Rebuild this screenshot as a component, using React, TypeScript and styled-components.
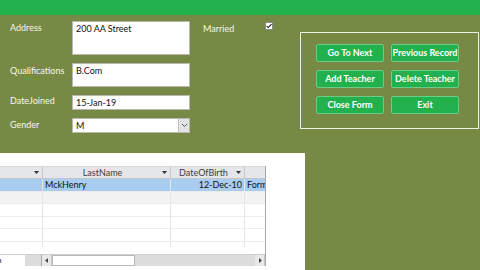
import React from "react";
import styled, { createGlobalStyle } from "styled-components";

const Global = createGlobalStyle`
  html, body { margin: 0; padding: 0; width: 480px; height: 270px; overflow: hidden; background: #778a45; }
  body { font-family: Lato, "Liberation Sans", sans-serif; }
  * { box-sizing: border-box; }
`;

const Page = styled.div`
  width: 480px;
  height: 270px;
  display: flex;
  flex-direction: column;
  background: #778a45;
  overflow: hidden;
`;

const TopBar = styled.div`
  height: 15px;
  flex: none;
  background: #22b14c;
`;

const Upper = styled.div`
  height: 138px;
  flex: none;
  display: flex;
`;

const Fields = styled.div`
  display: grid;
  grid-template-columns: 62px 118px;
  grid-template-rows: 34px 24px 15px 15px;
  row-gap: 8px;
  padding: 6px 0 0 10px;
  align-content: start;
`;

const Label = styled.div<{ $pad: number }>`
  color: #f6f6ee;
  font-size: 9px;
  line-height: 11px;
  padding-top: ${(p) => p.$pad}px;
  white-space: nowrap;
`;

const TextBox = styled.div`
  background: #fff;
  border: 1px solid #b8b8b0;
  color: #111;
  font-size: 9px;
  line-height: 11px;
  padding: 1px 3px;
  display: flex;
  align-items: flex-start;
`;

const Combo = styled(TextBox)`
  padding: 1px 0 1px 3px;
  justify-content: space-between;
`;

const DropBtn = styled.div`
  width: 11px;
  height: 13px;
  margin-top: -1px;
  background: #e4e4e4;
  border-left: 1px solid #c0c0c0;
  display: flex;
  align-items: center;
  justify-content: center;
`;

const MarriedBlock = styled.div`
  width: 110px;
  display: flex;
  align-items: flex-start;
  padding: 8px 0 0 13px;
`;

const MarriedLabel = styled.div`
  width: 62px;
  color: #f6f6ee;
  font-size: 9px;
  line-height: 11px;
`;

const Check = styled.div`
  width: 8px;
  height: 8px;
  margin-top: -1px;
  background: #fff;
  border: 1px solid #8a8a8a;
  display: flex;
  align-items: center;
  justify-content: center;
`;

const Frame = styled.div`
  margin-top: 17px;
  width: 179px;
  height: 97px;
  border: 1px solid #eef0e4;
  padding: 11px 0 0 15px;
  display: grid;
  grid-template-columns: 68px 68px;
  grid-auto-rows: 18px;
  column-gap: 7px;
  row-gap: 8px;
  align-content: start;
`;

const Button = styled.button`
  margin: 0;
  padding: 0;
  background: #22b14c;
  border: 1px solid #6ccb86;
  border-radius: 2px;
  color: #fff;
  font-family: Lato, "Liberation Sans", sans-serif;
  font-weight: 700;
  font-size: 9px;
  line-height: 16px;
  white-space: nowrap;
  display: flex;
  align-items: center;
  justify-content: center;
`;

const Lower = styled.div`
  flex: 1;
  display: flex;
`;

const SubPanel = styled.div`
  width: 305px;
  background: #fff;
  padding-top: 13px;
`;

const Sheet = styled.div`
  width: 266px;
  height: 100px;
  display: flex;
  flex-direction: column;
  border-right: 1px solid #a8a8a8;
  overflow: hidden;
`;

const cols = "43px 128px 74px 74px";

const HeadRow = styled.div`
  height: 13px;
  flex: none;
  display: grid;
  grid-template-columns: ${cols};
  background: #e4e6ea;
  border-bottom: 1px solid #c4c6ca;
  border-top: 1px solid #d4d6da;
`;

const HeadCell = styled.div`
  display: flex;
  align-items: center;
  border-right: 1px solid #c4c6ca;
  font-size: 9px;
  line-height: 11px;
  color: #3c3c3c;
  padding-right: 3px;
  overflow: hidden;
`;

const HeadText = styled.span`
  flex: 1;
  text-align: center;
  white-space: nowrap;
`;

const Body = styled.div`
  height: 68px;
  flex: none;
  overflow: hidden;
`;

const Row = styled.div<{ $bg: string }>`
  height: 12.5px;
  display: grid;
  grid-template-columns: ${cols};
  background: ${(p) => p.$bg};
  border-bottom: 1px solid #ececec;
`;

const Cell = styled.div<{ $right?: boolean }>`
  border-right: 1px solid #e6e6e6;
  font-size: 9px;
  line-height: 11px;
  color: #111;
  padding: 0 2px;
  white-space: nowrap;
  overflow: hidden;
  text-align: ${(p) => (p.$right ? "right" : "left")};
`;

const Spacer = styled.div`
  height: 7px;
  flex: none;
`;

const NavBar = styled.div`
  height: 12px;
  flex: none;
  display: flex;
  background: #dcdcdc;
  border-top: 1px solid #cfcfcf;
`;

const SearchBox = styled.div`
  width: 25px;
  background: #fff;
  overflow: hidden;
  font-size: 8px;
  line-height: 10px;
  color: #111;
  white-space: nowrap;
`;

const SearchText = styled.span`
  display: inline-block;
  margin-left: -22px;
`;

const NavGap = styled.div`
  width: 17px;
  border-right: 1px solid #a8a8a8;
`;

const ArrowBtn = styled.div`
  width: 10px;
  display: flex;
  align-items: center;
  justify-content: center;
  background: #e8e8e8;
  border-right: 1px solid #c8c8c8;
`;

const Thumb = styled.div`
  width: 83px;
  background: #fff;
  border: 1px solid #b8b8b8;
`;

const Track = styled.div`
  flex: 1;
`;

const Rest = styled.div`
  flex: 1;
`;

const Arrow = ({ left }: { left?: boolean }) => (
  <svg width="4" height="5" viewBox="0 0 4 5">
    <path d={left ? "M3 0 L0 2.5 L3 5 Z" : "M1 0 L4 2.5 L1 5 Z"} fill="#444" />
  </svg>
);

const DownMark = () => (
  <svg width="5" height="3" viewBox="0 0 5 3">
    <path d="M0 0 H5 L2.5 3 Z" fill="#333" />
  </svg>
);

const headers = ["", "LastName", "DateOfBirth", "Class"];

export default function App() {
  return (
    <Page>
      <Global />
      <TopBar />
      <Upper>
        <Fields>
          <Label $pad={1}>Address</Label>
          <TextBox>200 AA Street</TextBox>
          <Label $pad={2}>Qualifications</Label>
          <TextBox>B.Com</TextBox>
          <Label $pad={0}>DateJoined</Label>
          <TextBox>15-Jan-19</TextBox>
          <Label $pad={1}>Gender</Label>
          <Combo>
            M
            <DropBtn>
              <svg width="7" height="5" viewBox="0 0 7 5">
                <path d="M1 1 L3.5 3.5 L6 1" stroke="#555" strokeWidth="1" fill="none" />
              </svg>
            </DropBtn>
          </Combo>
        </Fields>
        <MarriedBlock>
          <MarriedLabel>Married</MarriedLabel>
          <Check>
            <svg width="7" height="6" viewBox="0 0 7 6">
              <path d="M0.8 3 L2.6 4.8 L6.4 0.8" stroke="#111" strokeWidth="1.2" fill="none" />
            </svg>
          </Check>
        </MarriedBlock>
        <Frame>
          <Button>Go To Next</Button>
          <Button>Previous Record</Button>
          <Button>Add Teacher</Button>
          <Button>Delete Teacher</Button>
          <Button>Close Form</Button>
          <Button>Exit</Button>
        </Frame>
      </Upper>
      <Lower>
        <SubPanel>
          <Sheet>
            <HeadRow>
              {headers.map((h, i) => (
                <HeadCell key={i}>
                  <HeadText>{h}</HeadText>
                  <DownMark />
                </HeadCell>
              ))}
            </HeadRow>
            <Body>
              <Row $bg="#a9cdf0">
                <Cell />
                <Cell>MckHenry</Cell>
                <Cell $right>12-Dec-10</Cell>
                <Cell>Form 3</Cell>
              </Row>
              <Row $bg="#f2f2f2">
                <Cell />
                <Cell />
                <Cell />
                <Cell />
              </Row>
              {[0, 1, 2, 3].map((r) => (
                <Row key={r} $bg="#fff">
                  <Cell />
                  <Cell />
                  <Cell />
                  <Cell />
                </Row>
              ))}
            </Body>
            <Spacer />
            <NavBar>
              <SearchBox>
                <SearchText>Search</SearchText>
              </SearchBox>
              <NavGap />
              <ArrowBtn>
                <Arrow left />
              </ArrowBtn>
              <Thumb />
              <Track />
              <ArrowBtn>
                <Arrow />
              </ArrowBtn>
            </NavBar>
          </Sheet>
        </SubPanel>
        <Rest />
      </Lower>
    </Page>
  );
}
